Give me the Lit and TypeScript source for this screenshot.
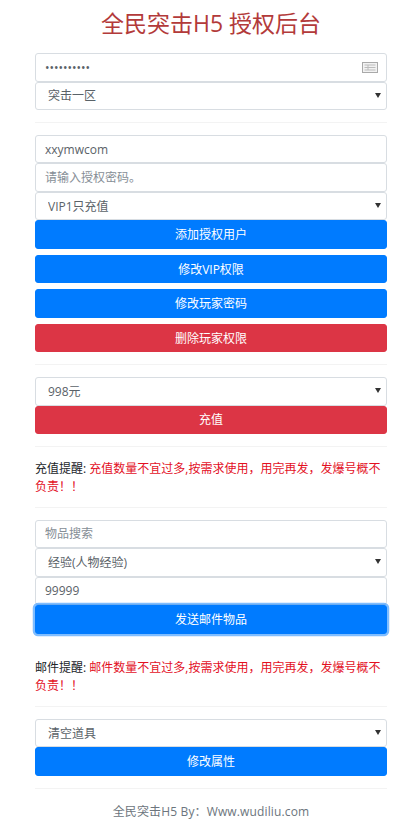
import { LitElement, html, css } from "lit";
import { customElement } from "lit/decorators.js";

@customElement("app-root")
export class AppRoot extends LitElement {
  static styles = css`
    :host {
      display: block;
      width: 409px;
      height: 826px;
      overflow: hidden;
      background: #fff;
      font-family: "Open Sans", "Noto Sans CJK SC", sans-serif;
      font-size: 12px;
      line-height: 18px;
      color: #212529;
    }
    .page {
      box-sizing: border-box;
      width: 387px;
      padding: 0 0 0 35px;
      display: flex;
      flex-direction: column;
    }
    h1 {
      margin: 0;
      height: 53px;
      padding-top: 5px;
      box-sizing: border-box;
      text-align: center;
      font-size: 23px;
      line-height: 36px;
      font-weight: 400;
      color: #b33a3a;
      white-space: nowrap;
    }
    input, select {
      display: block;
      box-sizing: border-box;
      width: 100%;
      height: 28.5px;
      margin: 0;
      padding: 0 9px;
      border: 0.75px solid #d8dde2;
      border-radius: 3px;
      background: #fff;
      color: #5a6268;
      font: inherit;
      outline: none;
      appearance: none;
    }
    input::placeholder { color: #868e96; opacity: 1; }
    select { padding: 1px 12px 0; }
    .pw { position: relative; }
    .pw svg {
      position: absolute;
      right: 9px;
      top: 8px;
      width: 16px;
      height: 13px;
    }
    .sel { position: relative; }
    .sel::after {
      content: "";
      position: absolute;
      right: 6px;
      top: 11px;
      border-left: 3px solid transparent;
      border-right: 3px solid transparent;
      border-top: 5px solid #333;
      pointer-events: none;
    }
    button {
      display: block;
      box-sizing: border-box;
      width: 100%;
      height: 28.5px;
      margin: 0;
      padding: 1px 0 0;
      border: 0.75px solid #007bff;
      border-radius: 3px;
      background: #007bff;
      color: #fff;
      font: inherit;
    }
    .gap { margin-top: 6px; }
    .danger { background: #dc3545; border-color: #dc3545; }
    .focus { box-shadow: 0 0 0 2.25px rgba(0, 123, 255, 0.5); }
    hr {
      width: 100%;
      height: 1px;
      margin: 12px 0 11.75px;
      border: 0;
      background: #f3f3f3;
    }
    .tip { margin: 0; padding-top: 1px; height: 36px; box-sizing: border-box; }
    .tip b { font-weight: 400; color: #212529; }
    .tip span { color: #e3101f; }
    .mail-tip { margin-top: 24.5px; }
    .foot {
      margin: 0;
      padding-top: 2px;
      text-align: center;
      color: #6c757d;
      letter-spacing: 0.14px;
      white-space: nowrap;
    }
  `;

  render() {
    return html`
      <div class="page">
        <h1>全民突击H5 授权后台</h1>
        <div class="pw">
          <input type="password" value="**********" />
          <svg viewBox="0 0 16 13" fill="none" stroke="#a9a9a9" stroke-width="1">
            <rect x="0.5" y="1.5" width="15" height="10" fill="#f2f2f2" />
            <path d="M2.5 4h11M2.5 6.5h11M2.5 9h11M6 4v5" stroke="#bcbcbc" />
          </svg>
        </div>
        <div class="sel"><select><option>突击一区</option></select></div>
        <hr />
        <input value="xxymwcom" />
        <input placeholder="请输入授权密码。" />
        <div class="sel"><select><option>VIP1只充值</option></select></div>
        <button>添加授权用户</button>
        <button class="gap">修改VIP权限</button>
        <button class="gap">修改玩家密码</button>
        <button class="gap danger">删除玩家权限</button>
        <hr />
        <div class="sel"><select><option>998元</option></select></div>
        <button class="danger">充值</button>
        <hr />
        <p class="tip"><b>充值提醒:</b> <span>充值数量不宜过多,按需求使用，用完再发，发爆号概不负责！！</span></p>
        <hr />
        <input placeholder="物品搜索" />
        <div class="sel"><select><option>经验(人物经验)</option></select></div>
        <input value="99999" />
        <button class="focus">发送邮件物品</button>
        <p class="tip mail-tip"><b>邮件提醒:</b> <span>邮件数量不宜过多,按需求使用，用完再发，发爆号概不负责！！</span></p>
        <hr />
        <div class="sel"><select><option>清空道具</option></select></div>
        <button>修改属性</button>
        <hr />
        <p class="foot">全民突击H5 By：Www.wudiliu.com</p>
      </div>
    `;
  }
}
